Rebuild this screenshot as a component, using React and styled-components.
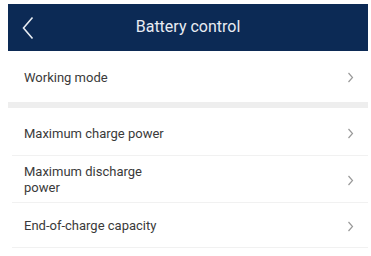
import React from "react";
import styled, { createGlobalStyle } from "styled-components";

const GlobalStyle = createGlobalStyle`
  body {
    margin: 0;
    background: #ffffff;
    font-family: Roboto, "Liberation Sans", Arial, sans-serif;
  }
`;

const Page = styled.div`
  width: 360px;
  margin: 4px 3px 0 8px;
`;

const Header = styled.header`
  height: 47px;
  background: #0c2a55;
  display: flex;
  align-items: center;
  justify-content: center;
  position: relative;
`;

const BackButton = styled.button`
  position: absolute;
  left: 10px;
  top: 11px;
  width: 20px;
  height: 26px;
  padding: 0;
  border: 0;
  background: none;
  display: flex;
  align-items: center;
  justify-content: center;
`;

const Title = styled.h1`
  margin: 0 0 2px;
  font-size: 16px;
  font-weight: 400;
  color: #e8ecf2;
`;

const Group = styled.div`
  background: #fff;
`;

const Gap = styled.div`
  height: 6px;
  background: #eeeeee;
`;

const Row = styled.div`
  height: ${({ $h }) => $h || 48}px;
  display: flex;
  align-items: center;
  justify-content: space-between;
  margin-left: ${({ $line }) => ($line ? 4 : 0)}px;
  padding: ${({ $top }) => $top || 0}px 14px 0 ${({ $line }) => ($line ? 12 : 16)}px;
  border-bottom: ${({ $line }) => ($line ? "1px solid #f1f1f1" : "0")};
  box-sizing: border-box;
`;

const Label = styled.span`
  max-width: 145px;
  font-size: 13px;
  line-height: 16px;
  color: #3a3a3a;
`;

const Chevron = () => (
  <svg width="7" height="11" viewBox="0 0 7 11">
    <polyline points="1.5,1 5.5,5.5 1.5,10" fill="none" stroke="#9a9a9a" strokeWidth="1.2" />
  </svg>
);

const rows = [
  { label: "Maximum charge power", h: 48, top: 4 },
  { label: "Maximum discharge power", h: 47, top: 2 },
  { label: "End-of-charge capacity", h: 45, top: 2 },
];

export default function App() {
  return (
    <>
      <GlobalStyle />
      <Page>
        <Header>
          <BackButton>
            <svg width="12" height="24" viewBox="0 0 12 24">
              <polyline points="10.5,1.5 1.5,12 10.5,22.5" fill="none" stroke="#e8ecf2" strokeWidth="1.6" />
            </svg>
          </BackButton>
          <Title>Battery control</Title>
        </Header>
        <Group>
          <Row $h={51} $top={2}>
            <Label>Working mode</Label>
            <Chevron />
          </Row>
        </Group>
        <Gap />
        <Group>
          {rows.map((r) => (
            <Row key={r.label} $line $h={r.h} $top={r.top}>
              <Label>{r.label}</Label>
              <Chevron />
            </Row>
          ))}
        </Group>
      </Page>
    </>
  );
}
